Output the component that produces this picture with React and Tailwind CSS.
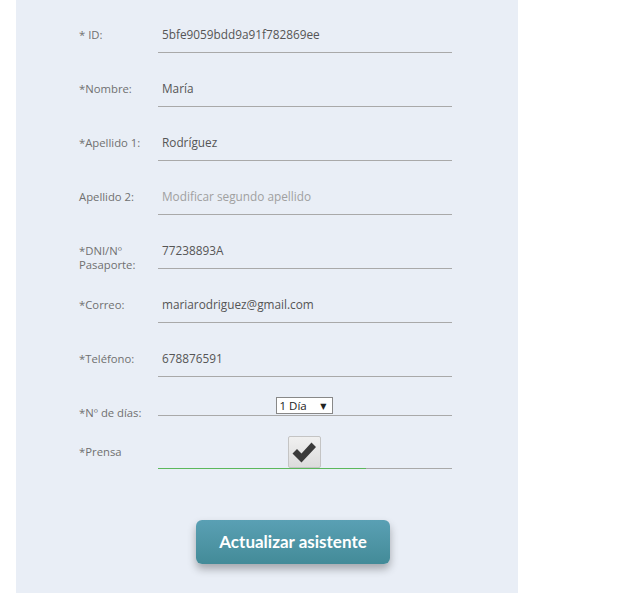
const font = { fontFamily: '"Open Sans", "DejaVu Sans", sans-serif' }

const FIELDS = [
  { label: '* ID:', value: '5bfe9059bdd9a91f782869ee' },
  { label: '*Nombre:', value: 'María' },
  { label: '*Apellido 1:', value: 'Rodríguez' },
  { label: 'Apellido 2:', value: 'Modificar segundo apellido', placeholder: true },
  { label: ['*DNI/Nº', 'Pasaporte:'], value: '77238893A' },
  { label: '*Correo:', value: 'mariarodriguez@gmail.com' },
  { label: '*Teléfono:', value: '678876591' },
]

function Row({ label, value, placeholder }) {
  const lines = Array.isArray(label) ? label : [label]
  return (
    <div className="flex h-[37px]">
      <div className="w-[79px] shrink-0 pt-[12px] text-[11.3px] leading-[14px] text-[#707070]">
        {lines.map((l) => (
          <div key={l}>{l}</div>
        ))}
      </div>
      <div
        className={`flex h-[37px] w-[294px] items-center border-b border-[#a9a9a9] pl-[4px] pt-[2px] text-[11.8px] ${
          placeholder ? 'text-[#a0a0a0]' : 'text-[#555]'
        }`}
      >
        {value}
      </div>
    </div>
  )
}

export default function App() {
  return (
    <div className="min-h-[593px] bg-white" style={font}>
      <div className="ml-[16px] flex min-h-[593px] w-[502px] flex-col bg-[#e9eef6] pl-[63px] pt-[16px]">
        <div className="flex flex-col gap-[17px]">
          {FIELDS.map((f) => (
            <Row key={f.value} {...f} />
          ))}
        </div>

        {/* días */}
        <div className="mt-[20px] flex h-[19px]">
          <div className="w-[79px] shrink-0 pt-[9px] text-[11.3px] leading-[13px] text-[#707070]">*Nº de días:</div>
          <div className="flex h-[19px] w-[294px] justify-center border-b border-[#a9a9a9]">
            <div className="ml-[-2px] flex h-[17px] w-[57px] items-center justify-between border border-[#888] bg-white pl-[3px] pr-[5px] text-[11.5px] leading-none text-[#222]">
              <span>1 Día</span>
              <span className="text-[8px]">▼</span>
            </div>
          </div>
        </div>

        {/* prensa */}
        <div className="mt-[20px] flex h-[33px]">
          <div className="w-[79px] shrink-0 pt-[9px] text-[11.3px] leading-[13px] text-[#707070]">*Prensa</div>
          <div className="flex w-[294px] flex-col">
            <div className="flex h-[32px] justify-center">
              <div className="ml-[-2px] flex h-[32px] w-[33px] items-center justify-center rounded-[2px] border border-[#c4c4c4] bg-gradient-to-b from-[#f0f0f0] to-[#dcdcdc]">
                <svg width="26" height="24" viewBox="0 0 26 24">
                  <path d="M1.5 13.5 L6 9 L10.5 13.5 L20.5 2.5 L25 7 L10.5 22.5 Z" fill="#3a3a3a" />
                </svg>
              </div>
            </div>
            <div className="flex h-[1px]">
              <div className="w-[208px] bg-[#5cb85c]" />
              <div className="flex-1 bg-[#a9a9a9]" />
            </div>
          </div>
        </div>

        <button
          className="mt-[51px] ml-[117px] h-[44px] w-[194px] rounded-[6px] bg-gradient-to-b from-[#5aa0b4] to-[#438b98] text-[17px] font-bold text-white shadow-[0_5px_8px_rgba(0,0,0,0.3)]"
          style={{ fontFamily: 'Lato, "Open Sans", sans-serif' }}
        >
          Actualizar asistente
        </button>
      </div>
    </div>
  )
}
